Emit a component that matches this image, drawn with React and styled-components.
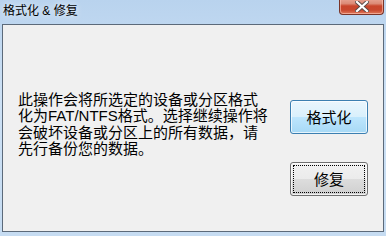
import styled, { createGlobalStyle } from "styled-components";

const GlobalStyle = createGlobalStyle`
  html, body {
    margin: 0;
    padding: 0;
    background: #c4daf0;
  }
  body {
    font-family: "Liberation Sans", "Noto Sans CJK SC", sans-serif;
  }
`;

const Window = styled.div`
  width: 386px;
  height: 236px;
  display: flex;
  flex-direction: column;
  box-sizing: border-box;
  padding: 0 2px 4px 2px;
  background: linear-gradient(180deg, #b9d3ee 0%, #cde1f5 40%, #c6dcf2 100%);
`;

const TitleBar = styled.div`
  height: 24px;
  display: flex;
  align-items: flex-start;
  justify-content: space-between;
  flex-shrink: 0;
`;

const Title = styled.div`
  font-size: 12px;
  line-height: 14px;
  color: #000;
  padding: 4px 0 0 1px;
  text-shadow: 0 0 6px rgba(255, 255, 255, 0.9);
`;

const CloseBtn = styled.div`
  width: 45px;
  height: 17px;
  margin-top: -2px;
  box-sizing: border-box;
  border: 1px solid #7a3428;
  border-top: none;
  border-radius: 0 0 4px 4px;
  background: linear-gradient(
    180deg,
    #e9a99a 0%,
    #dc8a76 35%,
    #c9452c 50%,
    #c8472e 75%,
    #e07a5c 100%
  );
  box-shadow: inset 0 0 0 1px rgba(255, 200, 185, 0.6);
  display: flex;
  align-items: center;
  justify-content: center;
  padding-top: 1px;
`;

const Client = styled.div`
  flex: 1;
  display: flex;
  align-items: flex-start;
  justify-content: space-between;
  background: #f0f0f0;
  border: 1px solid #5c6a7a;
  padding: 0 15px;
`;

const Message = styled.div`
  margin-top: 67px;
  font-size: 15px;
  line-height: 16.4px;
  color: #000;
  white-space: nowrap;
`;

const ButtonColumn = styled.div`
  margin-top: 75px;
  display: flex;
  flex-direction: column;
  gap: 28px;
`;

const Button = styled.button`
  position: relative;
  width: 78px;
  height: 34px;
  box-sizing: border-box;
  border-radius: 3px;
  font-family: "Liberation Sans", "Noto Sans CJK SC", sans-serif;
  font-size: 15px;
  color: #000;
  padding: 0;
  cursor: default;
  border: 1px solid ${(p) => (p.$hot ? "#3c7fb1" : "#707070")};
  background: ${(p) =>
    p.$hot
      ? "linear-gradient(180deg, #eaf6fd 0%, #d9f0fc 50%, #bee6fd 50%, #a7d9f5 100%)"
      : "linear-gradient(180deg, #f2f2f2 0%, #ebebeb 50%, #dddddd 50%, #cfcfcf 100%)"};
  box-shadow: inset 0 0 0 1px rgba(255, 255, 255, 0.7);
`;

const FocusRing = styled.span`
  position: absolute;
  inset: 2px;
  border: 1px dotted #000;
  pointer-events: none;
`;

const Label = styled.span`
  position: relative;
  top: -1px;
`;

export default function App() {
  return (
    <>
      <GlobalStyle />
      <Window>
        <TitleBar>
          <Title>格式化 &amp; 修复</Title>
          <CloseBtn>
            <svg width="14" height="11" viewBox="0 0 14 11">
              <path
                d="M2 1 L12 10 M12 1 L2 10"
                stroke="#5a4a48"
                strokeWidth="4"
                strokeLinecap="square"
              />
              <path
                d="M2 1 L12 10 M12 1 L2 10"
                stroke="#ffffff"
                strokeWidth="2.2"
                strokeLinecap="square"
              />
            </svg>
          </CloseBtn>
        </TitleBar>
        <Client>
          <Message>
            此操作会将所选定的设备或分区格式
            <br />
            化为FAT/NTFS格式。选择继续操作将
            <br />
            会破坏设备或分区上的所有数据，请
            <br />
            先行备份您的数据。
          </Message>
          <ButtonColumn>
            <Button $hot>
              <Label>格式化</Label>
            </Button>
            <Button>
              <FocusRing />
              <Label>修复</Label>
            </Button>
          </ButtonColumn>
        </Client>
      </Window>
    </>
  );
}
